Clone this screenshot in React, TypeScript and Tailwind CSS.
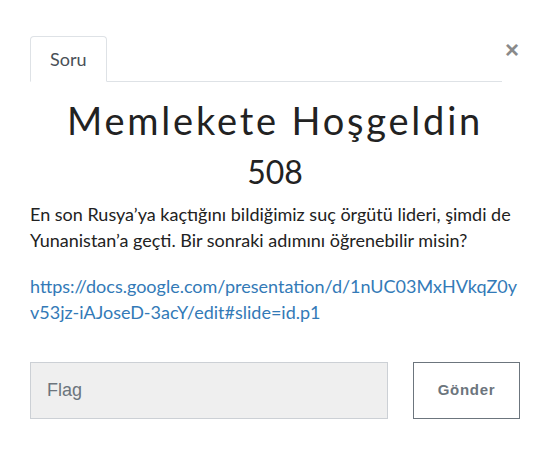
export default function App() {
  return (
    <div className="w-[554px] h-[471px] bg-white font-['Lato',sans-serif] text-[#222]">
      <div className="pl-[30px] pr-[34px] pt-[36px]">
        <div className="flex items-start">
          <ul className="flex flex-1 border-b border-[#dee2e6]">
            <li className="-mb-px">
              <span className="block h-[46px] px-[19px] pt-[11px] text-[18px] leading-[22px] text-[#495057] border border-[#dee2e6] border-b-white rounded-t-[4px] bg-white">
                Soru
              </span>
            </li>
          </ul>
          <button className="ml-[2px] w-[16px] mt-[2px] text-[24px] leading-[24px] text-[#8a8a8a] font-['Liberation_Sans',sans-serif] font-bold">
            ×
          </button>
        </div>

        <h1 className="mt-[14px] text-center text-[38px] leading-[48px] tracking-[2.8px] font-['Lato',sans-serif] text-[#222]">
          Memlekete Hoşgeldin
        </h1>
        <h2 className="mt-[8px] text-center text-[32px] leading-[40px] text-[#222]">508</h2>

        <p className="mt-[9px] text-[18px] leading-[26px]">
          En son Rusya’ya kaçtığını bildiğimiz suç örgütü lideri, şimdi de Yunanistan’a geçti. Bir sonraki adımını öğrenebilir misin?
        </p>
        <p className="mt-[20px] text-[18px] leading-[26px] break-all">
          <a className="text-[#337ab7]">https://docs.google.com/presentation/d/1nUC03MxHVkqZ0yv53jz-iAJoseD-3acY/edit#slide=id.p1</a>
        </p>

        <form className="mt-[37px] flex gap-[25px]">
          <input
            placeholder="Flag"
            className="w-[358px] h-[57px] px-[16px] bg-[#efefef] border border-[#ccd0d5] text-[18px] font-['Liberation_Sans',sans-serif] placeholder:text-[#6c757d] outline-none"
          />
          <button
            type="button"
            className="w-[107px] h-[57px] border border-[#6c757d] text-[#6c757d] text-[15px] font-bold tracking-[0.7px] font-['Liberation_Sans',sans-serif]"
          >
            Gönder
          </button>
        </form>
      </div>
    </div>
  );
}
